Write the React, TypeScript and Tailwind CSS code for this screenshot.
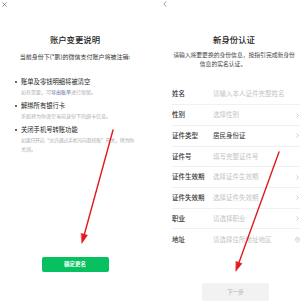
import React from "react";

const font = { fontFamily: '"Noto Sans CJK SC", "Noto Sans", sans-serif' };

type Row = { label: string; value: string; filled?: boolean; tail?: "chevron" | "pin" | null };

const rows: Row[] = [
  { label: "姓名", value: "请输入本人证件完整姓名", tail: null },
  { label: "性别", value: "选择性别", tail: "chevron" },
  { label: "证件类型", value: "居民身份证", filled: true, tail: "chevron" },
  { label: "证件号", value: "填写完整证件号", tail: null },
  { label: "证件生效期", value: "选择证件生效期", tail: "chevron" },
  { label: "证件失效期", value: "选择证件失效期", tail: "chevron" },
  { label: "职业", value: "请选择职业", tail: "chevron" },
  { label: "地址", value: "请选择住所地址地区", tail: "pin" },
];

function Chevron() {
  return (
    <svg width="3" height="5" viewBox="0 0 3 5" className="shrink-0">
      <path d="M0.5 0.5 L2.5 2.5 L0.5 4.5" fill="none" stroke="#b8b8b8" strokeWidth="0.7" />
    </svg>
  );
}

function Pin() {
  return (
    <svg width="5" height="6" viewBox="0 0 5 6" className="shrink-0 -mr-[1px]">
      <path
        d="M2.5 5.6 C1.2 4.3 0.5 3.3 0.5 2.4 A2 2 0 0 1 4.5 2.4 C4.5 3.3 3.8 4.3 2.5 5.6 Z"
        fill="none"
        stroke="#b8b8b8"
        strokeWidth="0.6"
      />
      <circle cx="2.5" cy="2.4" r="0.7" fill="none" stroke="#b8b8b8" strokeWidth="0.5" />
    </svg>
  );
}

function Bullet({ title, children }: { title: string; children: React.ReactNode }) {
  return (
    <li className="flex">
      <div className="w-[6px] h-[8px] flex items-center shrink-0">
        <span className="w-[2px] h-[2px] rounded-full bg-[#333]" />
      </div>
      <div>
        <div className="text-[6.3px] leading-[8px] text-[#222] whitespace-nowrap">{title}</div>
        <div className="mt-[1px] text-[5px] leading-[9px] text-[#b0b0b0] whitespace-nowrap">
          {children}
        </div>
      </div>
    </li>
  );
}

function Arrows() {
  return (
    <svg className="absolute inset-0 pointer-events-none" width="300" height="301" viewBox="0 0 300 301">
      <g stroke="#e3191f" strokeWidth="1.4" strokeLinecap="round" fill="#e3191f">
        <line x1="113" y1="130" x2="84.2" y2="235" />
        <polygon points="82,243 87.4,235.2 81.4,233.5" strokeWidth="0.6" strokeLinejoin="round" />
        <line x1="279" y1="152" x2="238.8" y2="263" />
        <polygon points="236,271 241.9,263.6 236.2,261.5" strokeWidth="0.6" strokeLinejoin="round" />
      </g>
    </svg>
  );
}

export default function App() {
  return (
    <div className="relative w-[300px] h-[301px] overflow-hidden bg-white flex" style={font}>
      {/* left screen */}
      <div className="w-[150px] shrink-0 pt-[2px]">
        <div className="pl-[2px] h-[5px]">
          <svg width="5" height="5" viewBox="0 0 5 5">
            <path d="M0.4 0.4 L4.6 4.6 M4.6 0.4 L0.4 4.6" stroke="#555" strokeWidth="0.6" />
          </svg>
        </div>
        <h1 className="mt-[27px] text-center text-[8.4px] leading-[10px] font-medium text-[#1a1a1a]">
          账户变更说明
        </h1>
        <p className="mt-[9px] text-center text-[6px] leading-[8px] text-[#333] whitespace-nowrap">
          当前身份下(*鹏)的微信支付账户将被注销:
        </p>
        <ul className="mt-[17px] pl-[15px] flex flex-col gap-[6px]">
          <Bullet title="账单及零钱明细将被清空">
            如有需要，可<span className="text-[#576b95]">导出账单</span>进行保留。
          </Bullet>
          <Bullet title="解绑所有银行卡">系统将为你清空当前身份下的绑卡信息。</Bullet>
          <Bullet title="关闭手机号转账功能">
            <span className="tracking-[-0.3px]">如果已开启“允许通过手机号向我转账”开关，将为你</span>
            <br />
            关闭。
          </Bullet>
        </ul>
        <div className="mt-[104px] mx-auto w-[67px] h-[15px] rounded-[2px] bg-[#07c160] flex items-center justify-center text-white text-[5.5px] font-bold">
          确定更名
        </div>
      </div>

      {/* right screen */}
      <div className="ml-[9px] w-[150px] shrink-0 pt-[1px]">
        <div className="pl-[4px] h-[6px]">
          <svg width="4" height="6" viewBox="0 0 4 6">
            <path d="M3.2 0.4 L0.8 3 L3.2 5.6" fill="none" stroke="#555" strokeWidth="0.6" />
          </svg>
        </div>
        <h1 className="mt-[27px] text-center text-[8.4px] leading-[10px] font-medium text-[#1a1a1a]">
          新身份认证
        </h1>
        <p className="mt-[5.5px] text-center text-[5.8px] leading-[9px] text-[#444] whitespace-nowrap">
          请输入将要更换的身份信息，按指引完成新身份
          <br />
          <span className="pr-[22px]">信息的实名认证。</span>
        </p>
        <div className="mt-[17px] pl-[13px]">
          {rows.map((r, i) => (
            <div
              key={r.label}
              className={`h-[20.7px] flex items-center pr-[10px] ${
                i < rows.length - 1 ? "border-b border-[#f0f0f0]" : ""
              }`}
            >
              <div className="w-[41px] shrink-0 text-[6.5px] font-medium text-[#333]">{r.label}</div>
              <div className={`flex-1 text-[6.5px] whitespace-nowrap ${r.filled ? "text-[#333]" : "text-[#c4c4c4]"}`}>
                {r.value}
              </div>
              {r.tail === "chevron" && <Chevron />}
              {r.tail === "pin" && <Pin />}
            </div>
          ))}
        </div>
        <div className="mt-[33px] ml-[43px] w-[67px] h-[18px] rounded-[2px] bg-[#f2f2f2] flex items-center justify-center text-[#c6c6c6] text-[5.5px] font-bold">
          下一步
        </div>
      </div>

      <Arrows />
    </div>
  );
}
